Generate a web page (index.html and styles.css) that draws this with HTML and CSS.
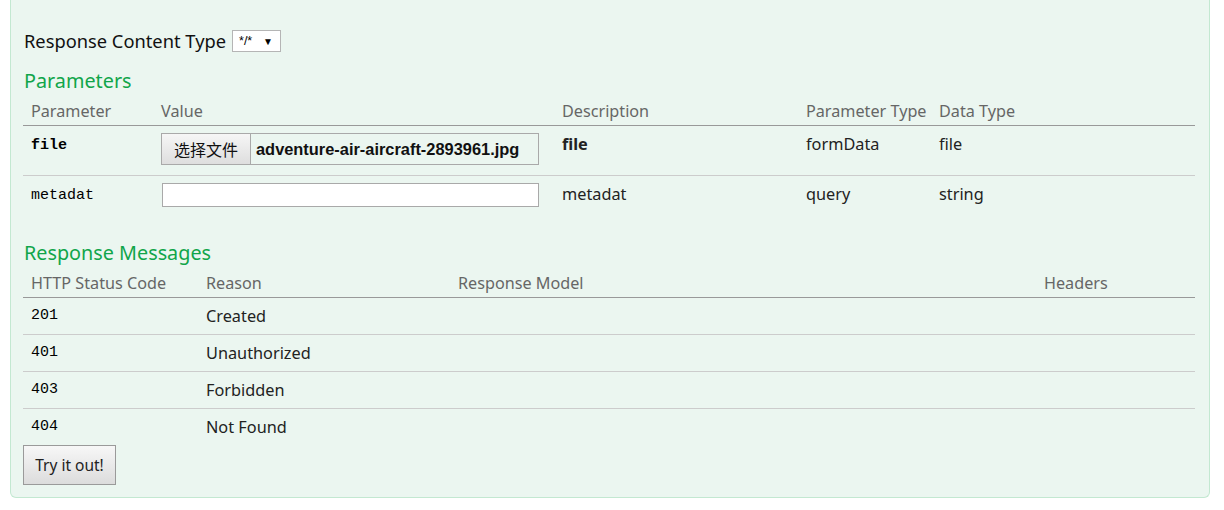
FILE: index.html
```html
<!DOCTYPE html>
<html lang="en">
<head>
<meta charset="utf-8">
<title>Operation</title>
<link rel="stylesheet" href="styles.css">
</head>
<body>
<div class="panel">
  <div class="content-type">
    <span class="ct-label">Response Content Type</span>
    <span class="fake-select"><span class="sel-val">*/*</span><span class="sel-arrow">▼</span></span>
  </div>

  <h4 class="section-title first">Parameters</h4>
  <table class="ptable">
    <colgroup>
      <col class="pc1"><col class="pc2"><col class="pc3"><col class="pc4"><col class="pc5">
    </colgroup>
    <thead>
      <tr><th>Parameter</th><th>Value</th><th>Description</th><th>Parameter Type</th><th>Data Type</th></tr>
    </thead>
    <tbody>
      <tr class="sep">
        <td class="code strong">file</td>
        <td>
          <div class="file-input"><button class="file-btn" type="button">选择文件</button><span class="file-name">adventure-air-aircraft-2893961.jpg</span></div>
        </td>
        <td class="strong">file</td>
        <td>formData</td>
        <td>file</td>
      </tr>
      <tr>
        <td class="code">metadat</td>
        <td><input class="text-input" type="text"></td>
        <td>metadat</td>
        <td>query</td>
        <td>string</td>
      </tr>
    </tbody>
  </table>

  <h4 class="section-title second">Response Messages</h4>
  <table class="rtable">
    <colgroup>
      <col class="rc1"><col class="rc2"><col class="rc3"><col class="rc4">
    </colgroup>
    <thead>
      <tr><th>HTTP Status Code</th><th>Reason</th><th>Response Model</th><th>Headers</th></tr>
    </thead>
    <tbody>
      <tr class="sep"><td class="code">201</td><td>Created</td><td></td><td></td></tr>
      <tr class="sep"><td class="code">401</td><td>Unauthorized</td><td></td><td></td></tr>
      <tr class="sep"><td class="code">403</td><td>Forbidden</td><td></td><td></td></tr>
      <tr class="last"><td class="code">404</td><td>Not Found</td><td></td><td></td></tr>
    </tbody>
  </table>

  <button class="try-btn" type="button">Try it out!</button>
</div>
</body>
</html>
```

FILE: styles.css
```css
html, body {
  margin: 0;
  padding: 0;
  background: #ffffff;
}

body {
  font-family: "Noto Sans", "Open Sans", "Noto Sans CJK SC", sans-serif;
  color: #222;
}

.panel {
  width: 1172px;
  margin: 0 0 0 10px;
  padding: 30px 14px 12px 12px;
  background: #ebf6f0;
  border: 1px solid #c3e8d1;
  border-top: 0;
  border-radius: 0 0 6px 6px;
}

.content-type {
  display: flex;
  align-items: center;
  height: 22px;
  gap: 6px;
}

.ct-label {
  font-size: 18.3px;
  color: #111;
  line-height: 22px;
  padding-left: 1px;
}

.fake-select {
  display: inline-flex;
  align-items: center;
  box-sizing: border-box;
  height: 22px;
  width: 49px;
  padding: 0 7px 0 6px;
  background: #fff;
  border: 1px solid #b5b5b5;
  font-family: "Liberation Sans", Arial, sans-serif;
  font-size: 12.5px;
  color: #000;
  justify-content: space-between;
}

.sel-arrow {
  font-size: 10px;
}

.section-title {
  margin: 0;
  font-weight: normal;
  color: #10a54a;
  font-size: 19.8px;
  line-height: 28px;
  padding-left: 1px;
}

.section-title.first {
  margin-top: 15px;
}

.section-title.second {
  margin-top: 22px;
}

table {
  width: 1172px;
  border-collapse: collapse;
  table-layout: fixed;
}

th {
  text-align: left;
  font-weight: normal;
  color: #666;
  font-size: 16.2px;
  padding: 5px 0 0 8px;
  height: 25px;
  vertical-align: top;
  border-bottom: 1px solid #999;
  white-space: nowrap;
  line-height: 22px;
}

td {
  font-size: 16.3px;
  color: #222;
  padding: 7px 0 10px 8px;
  line-height: 22px;
  vertical-align: top;
}

.ptable td.code {
  padding-top: 9px;
}

tr.sep td {
  border-bottom: 1px solid #cccccc;
}

.rtable td {
  height: 37px;
  padding: 0 0 0 8px;
  vertical-align: middle;
  box-sizing: border-box;
}

.rtable tr.last td {
  height: 36px;
}

.code {
  font-family: "Liberation Mono", "DejaVu Sans Mono", monospace;
  font-size: 15px;
  color: #000;
}

.strong {
  font-weight: bold;
}

.pc1 { width: 130px; }
.pc2 { width: 401px; }
.pc3 { width: 244px; }
.pc4 { width: 133px; }
.pc5 { width: 264px; }

.rc1 { width: 175px; }
.rc2 { width: 252px; }
.rc3 { width: 586px; }
.rc4 { width: 159px; }

.file-input {
  display: flex;
  align-items: stretch;
  box-sizing: border-box;
  width: 378px;
  height: 32px;
  border: 1px solid #a9a9a9;
  background: #ebf6f0;
}

.file-btn {
  box-sizing: border-box;
  width: 89px;
  margin: 0;
  padding: 0;
  border: 0;
  border-right: 1px solid #a9a9a9;
  background: linear-gradient(#f6f6f6, #dedede);
  font-family: "Noto Sans CJK SC", sans-serif;
  font-size: 16px;
  color: #111;
}

.file-btn, .file-name {
  line-height: 30px;
}

.file-name {
  padding-left: 5px;
  font-family: "Liberation Sans", Arial, sans-serif;
  font-weight: bold;
  font-size: 16.4px;
  color: #111;
  white-space: nowrap;
}

.text-input {
  display: block;
  box-sizing: border-box;
  width: 377px;
  height: 24px;
  margin: 0 0 0 1px;
  border: 1px solid #a9a9a9;
  background: #fff;
  padding: 0 4px;
}

.try-btn {
  display: block;
  box-sizing: border-box;
  width: 93px;
  height: 40px;
  margin: 0;
  padding: 0;
  border: 1px solid #9a9a9a;
  background: linear-gradient(#f7f7f7, #dcdcdc);
  font-family: "Noto Sans", sans-serif;
  font-size: 15.5px;
  color: #222;
}
```
